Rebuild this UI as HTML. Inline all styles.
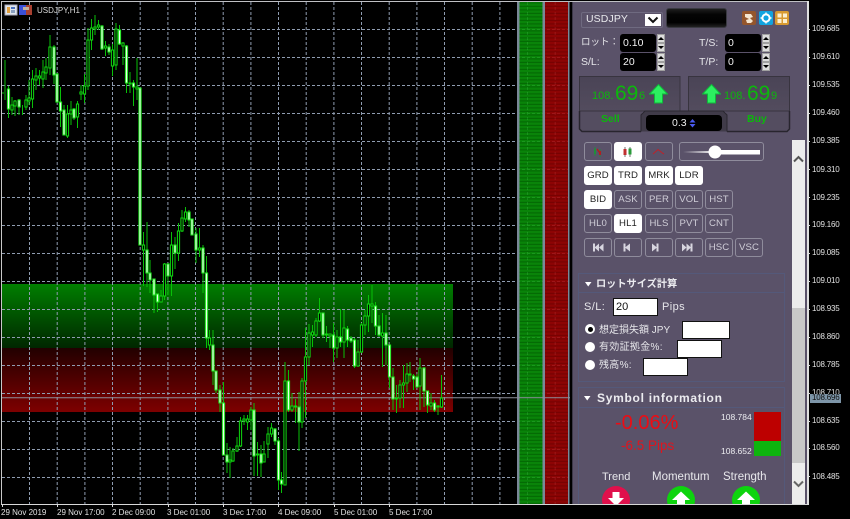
<!DOCTYPE html>
<html><head><meta charset="utf-8">
<style>
*{box-sizing:border-box}
html,body{margin:0;padding:0;background:#000}
body{width:850px;height:519px;position:relative;overflow:hidden;font-family:"Liberation Sans","Noto Sans CJK JP",sans-serif;filter:blur(.3px)}
.a{position:absolute}
.t{position:absolute;white-space:nowrap;line-height:1}
.ax{position:absolute;left:812px;font-size:8px;color:#e2e2e2;line-height:8px;letter-spacing:-.2px}
.tk{position:absolute;left:807px;width:3px;height:1px;background:#ddd}
.tl{position:absolute;top:508px;font-size:8px;line-height:9px;color:#e2e2e2;white-space:nowrap}
.tt{position:absolute;top:504px;width:1px;height:3px;background:#ddd}
.b{position:absolute;height:19px;width:28px;border:1px solid #8f8c9c;border-radius:3px;font-size:9.6px;line-height:17px;text-align:center;color:#d0ced8;letter-spacing:.1px}
.w{background:#fff;color:#222;border-color:#fff}
.sp{position:absolute;width:8px;height:9px;background:#dcdcdc;border:1px solid #a0a0a0}
.sp:after{content:"";position:absolute;left:0;top:2px;border-left:3px solid transparent;border-right:3px solid transparent}
.u:after{border-bottom:3px solid #000}
.d:after{border-top:3px solid #000}
.in{position:absolute;background:#000;border-radius:3px;color:#f2f2f2;font-size:10.5px;line-height:18px;height:18px;width:36px;padding-left:3px}
.wi{position:absolute;background:#fff;border:1px solid #111;height:18px}
.lb{position:absolute;color:#e6e6ea;font-size:10.5px;line-height:12px;white-space:nowrap}
.rd{position:absolute;left:585px;width:10px;height:10px;border-radius:50%;background:#fff}
</style></head>
<body>
<svg class="a" style="left:0;top:0" width="572" height="504" viewBox="0 0 572 504">
<defs>
<linearGradient id="gg" x1="0" y1="0" x2="0" y2="1"><stop offset="0" stop-color="#007e00"/><stop offset="1" stop-color="#002600"/></linearGradient>
<linearGradient id="rg" x1="0" y1="0" x2="0" y2="1"><stop offset="0" stop-color="#220000"/><stop offset="1" stop-color="#7e0000"/></linearGradient>
<pattern id="gs" width="4" height="3.5" patternUnits="userSpaceOnUse"><rect width="4" height="3.5" fill="#0a960a"/><rect y="2.3" width="4" height="1.2" fill="#057a05"/></pattern>
<pattern id="rs" width="4" height="3.5" patternUnits="userSpaceOnUse"><rect width="4" height="3.5" fill="#a00404"/><rect y="2.3" width="4" height="1.2" fill="#880202"/></pattern>
</defs>
<rect width="572" height="504" fill="#000"/>
<rect x="2" y="284" width="451" height="64" fill="url(#gg)"/>
<rect x="2" y="348" width="451" height="64" fill="url(#rg)"/>
<path d="M2 29.5H568M2 57.5H568M2 85.5H568M2 113.5H568M2 141.5H568M2 169.5H568M2 197.5H568M2 225.5H568M2 253.5H568M2 281.5H568M2 309.5H568M2 337.5H568M2 365.5H568M2 393.5H568M2 421.5H568M2 449.5H568M2 477.5H568" stroke="#8f9cb0" stroke-width="1" stroke-dasharray="3 2" fill="none"/>
<path d="M29.5 2V504M57.2 2V504M84.9 2V504M112.5 2V504M140.2 2V504M167.9 2V504M195.5 2V504M223.2 2V504M250.9 2V504M278.5 2V504M306.2 2V504M333.9 2V504M361.5 2V504M389.2 2V504M416.9 2V504M444.5 2V504M472.2 2V504M499.9 2V504M527.5 2V504M555.2 2V504" stroke="#8f9cb0" stroke-width="1" stroke-dasharray="3 2" fill="none"/>
<rect x="517" y="2" width="2.5" height="502" fill="#7a8898"/>
<rect x="519.5" y="2" width="23" height="502" fill="url(#gs)" opacity=".88"/>
<rect x="542.5" y="2" width="2.5" height="502" fill="#7a8898"/>
<rect x="545" y="2" width="23" height="502" fill="url(#rs)" opacity=".88"/>
<rect x="568" y="2" width="1.5" height="502" fill="#7a8898"/>
<path d="M2 397.8H570" stroke="#8d8f9c" stroke-width="1"/>
<path fill="none" stroke="#08c008" stroke-width="1" d="M3 92V94M5 60V100M8.5 86V118M12 97V115M15 100V116M19 99V115M22.5 105V115M26 95V110M29 80V105M32.5 70V108M36 68V90M39.5 70V85M43 60V88M46 58V80M50 35V75M54 45V84M57 73V103M60.5 87V127M64 105V130M67.5 105V138M71 101V125M74 108V120M77.5 101V128M81 85V100M84.5 74V103M88 28V90M91.5 19V50M95 15V35M98.5 20V30M102 25V50M105.5 41V56M109 44V55M112.5 44V76M116 23V70M119.5 25V45M123 42V65M126.5 45V93M130 72V93M133.5 80V106M137 58V100M140 88V245M143.5 232V286M147 222V287M150 260V293M154 279V313M157.5 294V312M161 290V302M164.5 263V300M168 263V295M171.5 232V296M175 237V269M178.5 223V261M182 210V232M185.5 207V222M189 210V227M192 219V235M196 228V263M199.5 228V257M203 245V293M206.5 256V348M209.5 330V350M213 330V385M216 371V393M220 385V412M223.5 382V455M227 443V473M230 447V478M233 448V462M237 437V452M240.5 417V447M244 415V425M247.5 415V430M251 407V430M254 403V476M257.5 442V476M261 445V477M264 441V462M268 427V458M271.5 423V437M275 428V445M278.5 438V490M281.5 472V493M285 362V485M288.5 370V412M292 393V412M295.5 399V423M299 392V451M302 378V428M305.5 328V418M309 324V365M312.5 325V347M316 318V337M319.5 298V322M323 313V338M326.5 326V342M330 334V348M333.5 323V362M337 330V358M340.5 309V347M344 310V358M347.5 326V347M351 336V343M354.5 338V368M358 340V367M361.5 323V353M365 310V335M368.5 295V332M372 285V323M375.5 302V335M379 315V337M382.5 313V367M386 315V365M389.5 345V388M393 368V410M396.5 385V413M400 380V408M403.5 365V408M407 363V392M410 362V382M413.5 374V390M417 374V388M420 358V410M424 367V407M427.5 391V413M431 393V410M434.5 400V412M438 405V415M441.5 375V408"/>
<path fill="#000" stroke="#10d810" stroke-width="1" d="M10.9 105h2.2V110h-2.2zM13.9 101h2.2V106h-2.2zM24.9 100h2.2V107h-2.2zM27.9 98h2.2V101h-2.2zM31.4 79h2.2V99h-2.2zM34.9 76h2.2V80h-2.2zM38.4 76h2.2V78h-2.2zM41.9 72h2.2V79h-2.2zM44.9 67h2.2V73h-2.2zM48.9 47h2.2V68h-2.2zM66.4 114h2.2V136h-2.2zM69.9 110h2.2V114h-2.2zM76.4 104h2.2V117h-2.2zM79.9 92h2.2V94h-2.2zM83.4 86h2.2V94h-2.2zM86.9 40h2.2V86h-2.2zM90.4 28h2.2V40h-2.2zM93.9 27h2.2V29h-2.2zM97.4 25h2.2V27h-2.2zM104.4 46h2.2V48h-2.2zM111.4 50h2.2V66h-2.2zM114.9 29h2.2V65h-2.2zM121.9 43h2.2V46h-2.2zM128.9 83h2.2V84h-2.2zM135.9 87h2.2V89h-2.2zM142.4 245h2.2V250h-2.2zM159.9 296h2.2V302h-2.2zM163.4 264h2.2V296h-2.2zM170.4 245h2.2V276h-2.2zM177.4 231h2.2V253h-2.2zM180.9 218h2.2V231h-2.2zM184.4 212h2.2V219h-2.2zM198.4 248h2.2V250h-2.2zM208.4 338h2.2V345h-2.2zM228.9 460h2.2V462h-2.2zM231.9 451h2.2V461h-2.2zM235.9 446h2.2V451h-2.2zM239.4 421h2.2V446h-2.2zM242.9 419h2.2V421h-2.2zM246.4 419h2.2V422h-2.2zM249.9 410h2.2V420h-2.2zM256.4 454h2.2V455h-2.2zM262.9 454h2.2V462h-2.2zM266.9 434h2.2V444h-2.2zM270.4 428h2.2V434h-2.2zM283.9 381h2.2V485h-2.2zM290.9 406h2.2V410h-2.2zM294.4 406h2.2V407h-2.2zM300.9 381h2.2V422h-2.2zM304.4 357h2.2V381h-2.2zM307.9 333h2.2V357h-2.2zM311.4 332h2.2V335h-2.2zM314.9 321h2.2V335h-2.2zM318.4 313h2.2V321h-2.2zM325.4 334h2.2V335h-2.2zM328.9 334h2.2V336h-2.2zM335.9 337h2.2V348h-2.2zM342.9 328h2.2V342h-2.2zM356.9 352h2.2V366h-2.2zM360.4 325h2.2V352h-2.2zM363.9 316h2.2V325h-2.2zM367.4 304h2.2V316h-2.2zM370.9 304h2.2V306h-2.2zM381.4 333h2.2V336h-2.2zM395.4 398h2.2V399h-2.2zM398.9 385h2.2V398h-2.2zM402.4 383h2.2V385h-2.2zM405.9 374h2.2V383h-2.2zM408.9 374h2.2V375h-2.2zM418.9 368h2.2V386h-2.2zM429.9 403h2.2V406h-2.2zM436.9 406h2.2V407h-2.2zM440.4 398h2.2V407h-2.2z"/>
<path fill="#eaffea" stroke="#1ee81e" stroke-width="1" d="M7.4 89h2.2V109h-2.2zM18 100h2.2V107h-2.2zM52.9 47h2.2V75h-2.2zM55.9 74h2.2V102h-2.2zM59.4 102h2.2V111h-2.2zM62.9 110h2.2V135h-2.2zM72.9 109h2.2V118h-2.2zM100.9 26h2.2V49h-2.2zM107.9 47h2.2V52h-2.2zM118.4 30h2.2V44h-2.2zM125.4 46h2.2V83h-2.2zM132.4 83h2.2V87h-2.2zM138.9 88h2.2V245h-2.2zM145.9 250h2.2V273h-2.2zM148.9 273h2.2V280h-2.2zM152.9 279h2.2V295h-2.2zM156.4 294h2.2V302h-2.2zM166.9 264h2.2V276h-2.2zM173.9 245h2.2V253h-2.2zM187.9 212h2.2V220h-2.2zM190.9 219h2.2V235h-2.2zM194.9 234h2.2V250h-2.2zM201.9 248h2.2V273h-2.2zM205.4 273h2.2V338h-2.2zM211.9 345h2.2V371h-2.2zM214.9 371h2.2V390h-2.2zM218.9 390h2.2V403h-2.2zM222.4 403h2.2V455h-2.2zM225.9 455h2.2V462h-2.2zM252.9 410h2.2V456h-2.2zM259.9 454h2.2V463h-2.2zM273.9 429h2.2V441h-2.2zM277.4 441h2.2V480h-2.2zM280.4 480h2.2V484h-2.2zM287.4 381h2.2V410h-2.2zM297.9 407h2.2V422h-2.2zM321.9 313h2.2V335h-2.2zM332.4 335h2.2V348h-2.2zM339.4 337h2.2V342h-2.2zM346.4 329h2.2V340h-2.2zM349.9 338h2.2V341h-2.2zM353.4 340h2.2V366h-2.2zM374.4 306h2.2V326h-2.2zM377.9 326h2.2V335h-2.2zM384.9 333h2.2V345h-2.2zM388.4 345h2.2V377h-2.2zM391.9 377h2.2V399h-2.2zM412.4 376h2.2V379h-2.2zM415.9 377h2.2V387h-2.2zM422.9 368h2.2V391h-2.2zM426.4 391h2.2V405h-2.2zM433.4 403h2.2V410h-2.2z"/>
<rect x="5" y="5" width="12" height="10" fill="#dfe6ee" stroke="#aab" stroke-width="1"/><rect x="7" y="7" width="3" height="6" fill="#e0a040"/><rect x="11" y="7" width="4" height="2" fill="#4a70c0"/><rect x="11" y="10" width="4" height="3" fill="#8aa0c0"/>
<rect x="19" y="5" width="7" height="10" fill="#3a50d8"/><rect x="26" y="5" width="6" height="10" fill="#a84030"/><rect x="23" y="7" width="6" height="3" fill="#c0b0a0"/>
</svg>
<div class="t" style="left:37px;top:6px;font-size:8px;color:#dcdcdc;line-height:9px">USDJPY,H1</div>
<div class="a" style="left:1px;top:1px;width:807px;height:1px;background:#bfc0c4"></div>
<div class="a" style="left:1px;top:1px;width:1px;height:504px;background:#c8c8c8"></div>
<div class="a" style="left:1px;top:503.5px;width:807px;height:1.5px;background:#d8d8d8"></div>
<div class="a" style="left:807px;top:1px;width:1.5px;height:504px;background:#e0e0e0"></div>

<div class="tt" style="left:2px"></div><div class="tt" style="left:57px"></div><div class="tt" style="left:112px"></div><div class="tt" style="left:168px"></div><div class="tt" style="left:223px"></div><div class="tt" style="left:278px"></div><div class="tt" style="left:334px"></div><div class="tt" style="left:389px"></div>
<div class="tl" style="left:1px">29 Nov 2019</div><div class="tl" style="left:57px">29 Nov 17:00</div><div class="tl" style="left:112px">2 Dec 09:00</div><div class="tl" style="left:167px">3 Dec 01:00</div><div class="tl" style="left:223px">3 Dec 17:00</div><div class="tl" style="left:278px">4 Dec 09:00</div><div class="tl" style="left:334px">5 Dec 01:00</div><div class="tl" style="left:389px">5 Dec 17:00</div>

<div class="tk" style="top:29px"></div><div class="ax" style="top:25px">109.685</div>
<div class="tk" style="top:57px"></div><div class="ax" style="top:53px">109.610</div>
<div class="tk" style="top:85px"></div><div class="ax" style="top:81px">109.535</div>
<div class="tk" style="top:113px"></div><div class="ax" style="top:109px">109.460</div>
<div class="tk" style="top:141px"></div><div class="ax" style="top:137px">109.385</div>
<div class="tk" style="top:169px"></div><div class="ax" style="top:166px">109.310</div>
<div class="tk" style="top:197px"></div><div class="ax" style="top:194px">109.235</div>
<div class="tk" style="top:225px"></div><div class="ax" style="top:221px">109.160</div>
<div class="tk" style="top:253px"></div><div class="ax" style="top:249px">109.085</div>
<div class="tk" style="top:281px"></div><div class="ax" style="top:277px">109.010</div>
<div class="tk" style="top:309px"></div><div class="ax" style="top:305px">108.935</div>
<div class="tk" style="top:337px"></div><div class="ax" style="top:333px">108.860</div>
<div class="tk" style="top:365px"></div><div class="ax" style="top:361px">108.785</div>
<div class="tk" style="top:393px"></div><div class="ax" style="top:389px">108.710</div>
<div class="tk" style="top:421px"></div><div class="ax" style="top:417px">108.635</div>
<div class="tk" style="top:448px"></div><div class="ax" style="top:444px">108.560</div>
<div class="tk" style="top:476px"></div><div class="ax" style="top:473px">108.485</div>
<div class="a" style="left:810px;top:394px;width:31px;height:9px;background:#7d95a8"></div><div class="ax" style="top:394px;color:#111">108.696</div>

<div class="a" style="left:572px;top:2px;width:235px;height:502px;background:#5a5269;overflow:hidden">
<div class="a" style="left:0;top:0;width:1px;height:502px;background:#3c3848"></div>
</div>

<div class="a" style="left:581px;top:12px;width:82px;height:16px;border:1px solid #6f6a80;border-radius:2px"></div>
<div class="t" style="left:586px;top:14px;font-size:10.5px;color:#e8e8ec;letter-spacing:.1px">USDJPY</div>
<div class="a" style="left:645px;top:14px;width:16px;height:12px;background:#fff"></div>
<svg class="a" style="left:645px;top:14px" width="16" height="12"><path d="M3.5 3.5L8 8L12.5 3.5" fill="none" stroke="#111" stroke-width="2"/></svg>
<div class="a" style="left:666px;top:8px;width:61px;height:20px;background:linear-gradient(#1e1e1e,#050505 30%,#000 75%,#222);border:1px solid #3a3a42;border-radius:3px"></div>
<svg class="a" style="left:742px;top:11px" width="48" height="15">
<rect x="0" y="0" width="14" height="14" rx="2" fill="#94562c"/><path d="M3 3h6l2 3-3 1 3 3-2 2H5l-1-3 3-1-4-2z" fill="#f4e6d0"/>
<rect x="17" y="0" width="14" height="14" rx="2" fill="#12a4e0"/><circle cx="24" cy="7" r="3.6" fill="none" stroke="#fff" stroke-width="2"/><path d="M24 1.5v2M24 10.5v2M18.5 7h2M27.5 7h2" stroke="#fff" stroke-width="1.4"/>
<rect x="33" y="0" width="14" height="14" rx="2" fill="#d89a30"/><rect x="35.5" y="2.5" width="4" height="4" fill="#fbefd0"/><rect x="41" y="2.5" width="4" height="4" fill="#fbefd0"/><rect x="35.5" y="8" width="4" height="4" fill="#fbefd0"/><rect x="41" y="8" width="4" height="4" fill="#fbefd0"/>
</svg>

<div class="lb" style="left:581px;top:37px;font-size:9.5px">ロット：</div>
<div class="lb" style="left:581px;top:56px">S/L:</div>
<div class="lb" style="left:699px;top:37px">T/S:</div>
<div class="lb" style="left:699px;top:56px">T/P:</div>
<div class="in" style="left:620px;top:34px">0.10</div>
<div class="in" style="left:620px;top:53px">20</div>
<div class="in" style="left:725px;top:34px">0</div>
<div class="in" style="left:725px;top:53px">0</div>
<div class="sp u" style="left:657px;top:34px"></div><div class="sp d" style="left:657px;top:43px"></div>
<div class="sp u" style="left:657px;top:53px"></div><div class="sp d" style="left:657px;top:62px"></div>
<div class="sp u" style="left:762px;top:34px"></div><div class="sp d" style="left:762px;top:43px"></div>
<div class="sp u" style="left:762px;top:53px"></div><div class="sp d" style="left:762px;top:62px"></div>

<svg class="a" style="left:576px;top:73px" width="218" height="62">
<defs><linearGradient id="bx" x1="0" y1="0" x2="0" y2="1"><stop offset="0" stop-color="#4a4456"/><stop offset="1" stop-color="#534c5e"/></linearGradient></defs>
<path d="M3.5 38H66V59H5L3.5 57z" fill="#544d60"/>
<path d="M150 38H213.500V57L211 59H150z" fill="#544d60"/>
<rect x="3.5" y="3.5" width="100.5" height="34.5" fill="url(#bx)" stroke="#38343f" stroke-width="1"/>
<rect x="112.5" y="3.5" width="101" height="34.5" fill="url(#bx)" stroke="#38343f" stroke-width="1"/>
<path d="M3.5 38V56L6 58.5H65" fill="none" stroke="#28252e" stroke-width="1.5"/>
<path d="M213.5 38V56L211 58.5H151" fill="none" stroke="#28252e" stroke-width="1.5"/>
<path d="M65 58.5V42L69 38H147L151 42V58.5" fill="#403b49" stroke="#2a2730" stroke-width="1"/>
<rect x="70" y="42" width="76" height="16" rx="4" fill="#000"/>
</svg>
<div class="t" style="left:592px;top:91px;font-size:11px;color:#0cb80c">108.</div>
<div class="t" style="left:615px;top:83px;font-size:21px;color:#0cb80c">69</div>
<div class="t" style="left:639px;top:91px;font-size:11px;color:#0cb80c">6</div>
<div class="t" style="left:724px;top:91px;font-size:11px;color:#0cb80c">108.</div>
<div class="t" style="left:747px;top:83px;font-size:21px;color:#0cb80c">69</div>
<div class="t" style="left:771px;top:91px;font-size:11px;color:#0cb80c">9</div>
<svg class="a" style="left:649px;top:84px" width="19" height="20"><path d="M9.5 .5L18.5 10H13.5V19H5.5V10H.5z" fill="#2cf060" stroke="#0fb83a" stroke-width="1"/></svg>
<svg class="a" style="left:701.5px;top:84px" width="19" height="20"><path d="M9.5 .5L18.5 10H13.5V19H5.5V10H.5z" fill="#2cf060" stroke="#0fb83a" stroke-width="1"/></svg>
<div class="t" style="left:601px;top:114px;font-size:10.5px;font-weight:bold;color:#0cb80c">Sell</div>
<div class="t" style="left:747px;top:114px;font-size:10.5px;font-weight:bold;color:#0cb80c">Buy</div>
<div class="t" style="left:672px;top:118px;font-size:10.5px;color:#eee">0.3</div>
<svg class="a" style="left:689px;top:119px" width="7" height="9"><path d="M3.5 0L6.5 3.5H.5z" fill="#4a5af0"/><path d="M3.5 8.5L6.5 5H.5z" fill="#4a5af0"/></svg>

<div class="a" style="left:792px;top:140px;width:13px;height:364px;background:#ececec"></div>
<div class="a" style="left:792px;top:308px;width:13px;height:155px;background:#c8c8c8"></div>
<svg class="a" style="left:792px;top:154px" width="13" height="10"><path d="M2 7.5L6.5 3L11 7.5" fill="none" stroke="#555" stroke-width="2"/></svg>
<svg class="a" style="left:792px;top:479px" width="13" height="10"><path d="M2 2.5L6.5 7L11 2.5" fill="none" stroke="#666" stroke-width="2"/></svg>

<div class="b" style="left:584px;top:142px"></div>
<div class="b w" style="left:614px;top:142px"></div>
<div class="b" style="left:645px;top:142px"></div>
<div class="a" style="left:679px;top:142px;width:85px;height:19px;border:1px solid #8f8c9c;border-radius:3px"></div>
<svg class="a" style="left:584px;top:142px" width="90" height="19">
<path d="M11 5V14M16 7V15" stroke="#1f8f3a" stroke-width="1"/><rect x="10" y="7" width="2" height="5" fill="#1f8f3a"/><path d="M13 7l3 4" stroke="#b02020" stroke-width="1.5"/><rect x="15" y="9" width="2" height="4" fill="#b02020"/>
<path d="M41 5V15M46 5V15" stroke="#555" stroke-width=".8"/><rect x="39.5" y="7" width="3" height="6" fill="#c03030"/><rect x="44.5" y="6.5" width="3" height="6" fill="#2a9a3a"/>
<path d="M69 12L74 7.5L79 11.5L80 12" fill="none" stroke="#c02028" stroke-width="1"/>
</svg>
<svg class="a" style="left:679px;top:142px" width="85" height="19"><path d="M4 10L36 9V8H81V12.5H36V11z" fill="#fff"/><circle cx="36" cy="10" r="6.5" fill="#fff"/></svg>

<div class="b w" style="left:584px;top:166px">GRD</div>
<div class="b w" style="left:614px;top:166px">TRD</div>
<div class="b w" style="left:645px;top:166px">MRK</div>
<div class="b w" style="left:675px;top:166px">LDR</div>

<div class="b w" style="left:584px;top:190px">BID</div>
<div class="b" style="left:614px;top:190px">ASK</div>
<div class="b" style="left:645px;top:190px">PER</div>
<div class="b" style="left:675px;top:190px">VOL</div>
<div class="b" style="left:705px;top:190px">HST</div>

<div class="b" style="left:584px;top:214px">HL0</div>
<div class="b w" style="left:614px;top:214px">HL1</div>
<div class="b" style="left:645px;top:214px">HLS</div>
<div class="b" style="left:675px;top:214px">PVT</div>
<div class="b" style="left:705px;top:214px">CNT</div>

<div class="b" style="left:584px;top:238px"></div>
<div class="b" style="left:614px;top:238px"></div>
<div class="b" style="left:645px;top:238px"></div>
<div class="b" style="left:675px;top:238px"></div>
<div class="b" style="left:705px;top:238px">HSC</div>
<div class="b" style="left:735px;top:238px">VSC</div>
<svg class="a" style="left:584px;top:238px" width="120" height="19" fill="#d8d6e0">
<rect x="9" y="5.5" width="2" height="8"/><path d="M15 5.5V13.5L10.5 9.5z"/><path d="M19.5 5.500V13.5L15 9.5z"/>
<rect x="39.5" y="5.5" width="2" height="8"/><path d="M46 5.5V13.5L41 9.5z"/>
<path d="M68 5.5V13.5L73 9.5z"/><rect x="72.5" y="5.5" width="2" height="8"/>
<path d="M98 5.5V13.5L102.500 9.5z"/><path d="M102.5 5.5V13.5L107 9.5z"/><rect x="106.500" y="5.5" width="2" height="8"/>
</svg>

<div class="a" style="left:578px;top:273px;width:207px;height:109px;border:1px solid #54597a"></div>
<div class="a" style="left:578px;top:292px;width:207px;height:1px;background:#54597a"></div>
<svg class="a" style="left:585px;top:282px" width="7" height="5"><path d="M0 0H6.5L3.2 4.5z" fill="#fff"/></svg>
<div class="t" style="left:596px;top:278px;font-size:10.2px;font-weight:bold;color:#ececf0;line-height:13px">ロットサイズ計算</div>
<div class="lb" style="left:584px;top:301px;font-size:11px;letter-spacing:.4px">S/L:</div>
<div class="wi" style="left:613px;top:298px;width:45px;font-size:11px;line-height:16px;padding-left:2px;color:#111">20</div>
<div class="lb" style="left:662px;top:301px;font-size:11px;letter-spacing:.4px">Pips</div>
<div class="rd" style="top:324px"></div><div class="a" style="left:587.5px;top:326.5px;width:5px;height:5px;border-radius:50%;background:#000"></div>
<div class="lb" style="left:599px;top:324px;font-size:10px;line-height:13px">想定損失額 JPY</div>
<div class="wi" style="left:682px;top:321px;width:48px"></div>
<div class="rd" style="top:342px"></div>
<div class="lb" style="left:599px;top:341px;font-size:10px;line-height:13px;letter-spacing:.3px">有効証拠金%:</div>
<div class="wi" style="left:677px;top:340px;width:45px"></div>
<div class="rd" style="top:360px"></div>
<div class="lb" style="left:599px;top:359px;font-size:10px;line-height:13px;letter-spacing:.3px">残高%:</div>
<div class="wi" style="left:643px;top:358px;width:45px"></div>

<div class="a" style="left:578px;top:387px;width:207px;height:117px;border:1px solid #54597a;border-bottom:0"></div>
<div class="a" style="left:578px;top:407px;width:207px;height:1px;background:#54597a"></div>
<svg class="a" style="left:584px;top:396px" width="7" height="5"><path d="M0 0H6.5L3.2 4.5z" fill="#fff"/></svg>
<div class="t" style="left:597px;top:392px;font-size:12px;font-weight:bold;color:#ececf0;letter-spacing:.72px;line-height:13px">Symbol information</div>
<div class="t" style="left:615px;top:413px;font-size:20px;color:#ec0c14">-0.06%</div>
<div class="t" style="left:621px;top:439px;font-size:13.5px;color:#e0141e">-6.5 Pips</div>
<div class="t" style="left:721px;top:413px;font-size:8.5px;color:#ececf0">108.784</div>
<div class="t" style="left:721px;top:447px;font-size:8.5px;color:#ececf0">108.652</div>
<div class="a" style="left:754px;top:412px;width:27px;height:29px;background:#bd0000"></div>
<div class="a" style="left:754px;top:441px;width:27px;height:15px;background:#0eb40e"></div>
<div class="t" style="left:602px;top:472px;font-size:11px;color:#e8e8ec">Trend</div>
<div class="t" style="left:652px;top:472px;font-size:11.5px;color:#e8e8ec">Momentum</div>
<div class="t" style="left:723px;top:472px;font-size:11.5px;color:#e8e8ec">Strength</div>
<svg class="a" style="left:600px;top:485px" width="162" height="18.5">
<circle cx="16" cy="15" r="14" fill="#e0104c"/><path d="M12.5 7H19.5V13H24L16 21L8 13H12.5z" fill="#fff"/>
<circle cx="81" cy="15" r="14" fill="#0ed40e"/><path d="M81 6.5L90 15H85V24H77V15H72z" fill="#fff"/>
<circle cx="146" cy="15" r="14" fill="#0ed40e"/><path d="M146 6.5L155 15H150V24H142V15H137z" fill="#fff"/>
</svg>
</body></html>
